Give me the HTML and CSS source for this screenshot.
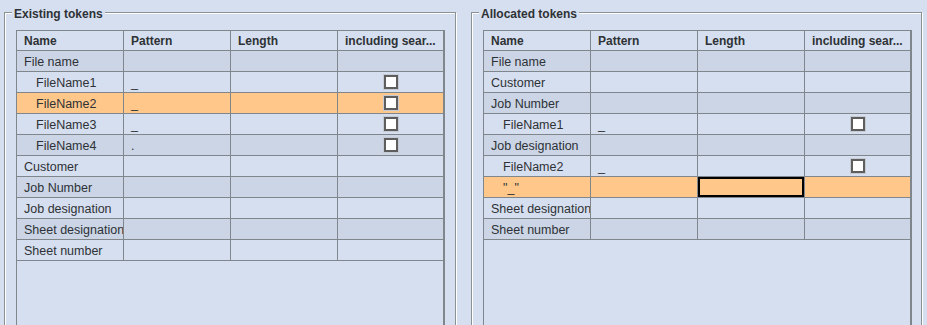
FILE: index.html
```html
<!DOCTYPE html>
<html>
<head>
<meta charset="utf-8">
<link rel="stylesheet" href="styles.css">
</head>
<body>
<div class="page">
  <section class="panel panel-left">
    <div class="panel-title">Existing tokens</div>
    <div class="table">
      <div class="row head">
        <div class="cell">Name</div><div class="cell">Pattern</div><div class="cell">Length</div><div class="cell">including sear...</div>
      </div>
      <div class="row dark">
        <div class="cell">File name</div><div class="cell"></div><div class="cell"></div><div class="cell"></div>
      </div>
      <div class="row">
        <div class="cell indent">FileName1</div><div class="cell">_</div><div class="cell"></div><div class="cell check"><span class="box"></span></div>
      </div>
      <div class="row selected">
        <div class="cell indent">FileName2</div><div class="cell">_</div><div class="cell"></div><div class="cell check"><span class="box"></span></div>
      </div>
      <div class="row">
        <div class="cell indent">FileName3</div><div class="cell">_</div><div class="cell"></div><div class="cell check"><span class="box"></span></div>
      </div>
      <div class="row dark">
        <div class="cell indent">FileName4</div><div class="cell">.</div><div class="cell"></div><div class="cell check"><span class="box"></span></div>
      </div>
      <div class="row">
        <div class="cell">Customer</div><div class="cell"></div><div class="cell"></div><div class="cell"></div>
      </div>
      <div class="row dark">
        <div class="cell">Job Number</div><div class="cell"></div><div class="cell"></div><div class="cell"></div>
      </div>
      <div class="row">
        <div class="cell">Job designation</div><div class="cell"></div><div class="cell"></div><div class="cell"></div>
      </div>
      <div class="row dark">
        <div class="cell">Sheet designation</div><div class="cell"></div><div class="cell"></div><div class="cell"></div>
      </div>
      <div class="row">
        <div class="cell">Sheet number</div><div class="cell"></div><div class="cell"></div><div class="cell"></div>
      </div>
    </div>
  </section>
  <section class="panel panel-right">
    <div class="panel-title">Allocated tokens</div>
    <div class="table">
      <div class="row head">
        <div class="cell">Name</div><div class="cell">Pattern</div><div class="cell">Length</div><div class="cell">including sear...</div>
      </div>
      <div class="row dark">
        <div class="cell">File name</div><div class="cell"></div><div class="cell"></div><div class="cell"></div>
      </div>
      <div class="row">
        <div class="cell">Customer</div><div class="cell"></div><div class="cell"></div><div class="cell"></div>
      </div>
      <div class="row dark">
        <div class="cell">Job Number</div><div class="cell"></div><div class="cell"></div><div class="cell"></div>
      </div>
      <div class="row">
        <div class="cell indent">FileName1</div><div class="cell">_</div><div class="cell"></div><div class="cell check"><span class="box"></span></div>
      </div>
      <div class="row dark">
        <div class="cell">Job designation</div><div class="cell"></div><div class="cell"></div><div class="cell"></div>
      </div>
      <div class="row">
        <div class="cell indent">FileName2</div><div class="cell">_</div><div class="cell"></div><div class="cell check"><span class="box"></span></div>
      </div>
      <div class="row selected">
        <div class="cell indent">"_"</div><div class="cell"></div><div class="cell focus"></div><div class="cell"></div>
      </div>
      <div class="row">
        <div class="cell">Sheet designation</div><div class="cell"></div><div class="cell"></div><div class="cell"></div>
      </div>
      <div class="row dark">
        <div class="cell">Sheet number</div><div class="cell"></div><div class="cell"></div><div class="cell"></div>
      </div>
    </div>
  </section>
</div>
</body>
</html>
```

FILE: styles.css
```css
html, body {
  margin: 0;
  padding: 0;
  height: 325px;
  overflow: hidden;
  background: #d6dfef;
}

.page {
  display: flex;
  gap: 15px;
  height: 325px;
  box-sizing: border-box;
  overflow: hidden;
  padding: 12px 0 0 4px;
  font-family: "Liberation Sans", Arial, sans-serif;
  font-size: 12.5px;
  color: #2e3236;
}

.panel {
  position: relative;
  box-sizing: border-box;
  height: 316px;
  padding: 17px 0 0 11px;
  border: 1px solid #8a9296;
  box-shadow: inset 1px 1px 0 #ffffff, 1px 1px 0 #ffffff;
}

.panel-left { width: 452px; }
.panel-right { width: 451px; }

.panel-title {
  position: absolute;
  top: -6px;
  left: 7px;
  padding: 0 2px;
  background: #d6dfef;
  font-weight: bold;
  font-size: 12px;
  line-height: 14px;
}

.table {
  width: 429px;
  height: 298px;
  box-sizing: border-box;
  border-top: 1px solid #7f878c;
  border-left: 1px solid #7f878c;
  border-right: 2px solid #7f878c;
}

.row {
  display: grid;
  grid-template-columns: 107px 107px 107px 105px;
  height: 21px;
  box-sizing: border-box;
  border-bottom: 1px solid #7f878c;
}

.row.dark { background: #cbd5e6; }
.row.selected { background: #ffc88a; }

.cell {
  box-sizing: border-box;
  border-right: 1px solid #7f878c;
  padding: 3px 0 0 7px;
  line-height: 17px;
  white-space: nowrap;
  overflow: hidden;
}

.cell:last-child { border-right: none; }

.cell.indent { padding-left: 19px; }

.row.head { height: 20px; }
.row.head .cell {
  font-weight: bold;
  font-size: 12px;
  padding-top: 2px;
}

.cell.check {
  display: flex;
  align-items: center;
  justify-content: center;
  padding: 0;
}

.box {
  display: block;
  width: 14px;
  height: 14px;
  box-sizing: border-box;
  background: #ffffff;
  border: 2px solid #5e5e5e;
  box-shadow: 0 0 0 1px #c6cad2;
}

.cell.focus {
  box-shadow: inset 0 0 0 2px #000000;
}
```
